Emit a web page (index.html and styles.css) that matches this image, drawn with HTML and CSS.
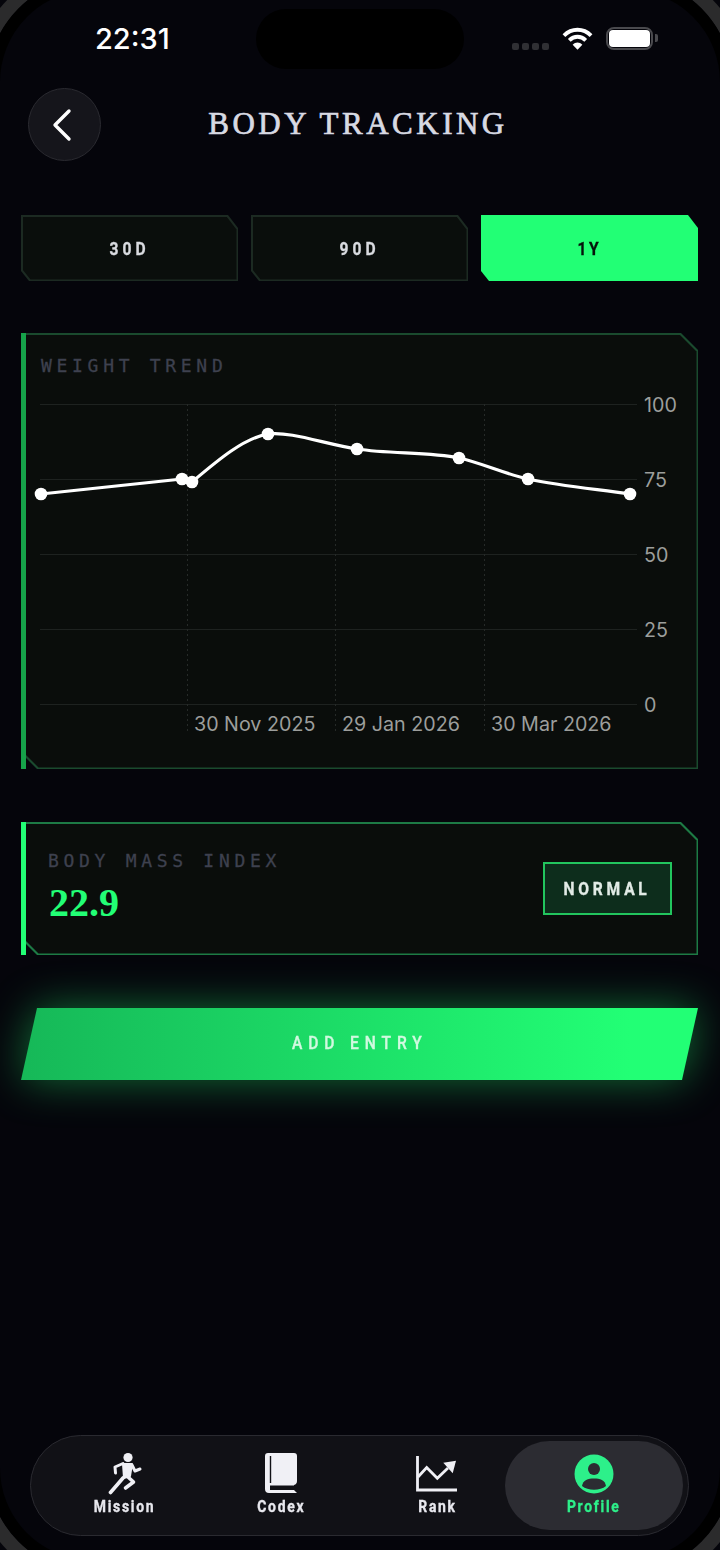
FILE: index.html
```html
<!DOCTYPE html>
<html lang="en">
<head>
  <meta charset="UTF-8">
  <title>Body Tracking</title>
  <link rel="stylesheet" href="styles.css">
</head>
<body>
  <div class="bezel"></div>

  <div class="status-bar">
    <span class="time">22:31</span>
    <div class="island"></div>
    <div class="status-icons">
      <div class="signal"><i></i><i></i><i></i><i></i></div>
      <svg class="wifi" width="31" height="24" viewBox="0 0 32 24">
        <path d="M2 9.5C10 1.5 22 1.5 30 9.5" fill="none" stroke="#fff" stroke-width="4"/>
        <path d="M7.5 14.5C12.5 9.5 19.5 9.5 24.5 14.5" fill="none" stroke="#fff" stroke-width="4"/>
        <path d="M11 19L16 24L21 19C18 16 14 16 11 19Z" fill="#fff"/>
      </svg>
      <div class="battery"><div class="battery-fill"></div></div>
    </div>
  </div>

  <header class="top-bar">
    <button class="back-btn">
      <svg width="24" height="34" viewBox="0 0 24 34">
        <path d="M19 3L5 17L19 31" fill="none" stroke="#fff" stroke-width="3.4" stroke-linecap="round" stroke-linejoin="round"/>
      </svg>
    </button>
    <h1 class="title">Body Tracking</h1>
  </header>

  <div class="ranges">
    <div class="range"><div class="range-inner"><span class="cond">30D</span></div></div>
    <div class="range"><div class="range-inner"><span class="cond">90D</span></div></div>
    <div class="range active"><div class="range-inner"><span class="cond">1Y</span></div></div>
  </div>

  <section class="card chart-card">
    <div class="card-frame">
      <div class="card-inner">
        <div class="label">WEIGHT TREND</div>
        <svg class="chart" width="672" height="340" viewBox="21 394 672 340">
          <g class="grid">
            <line x1="40" y1="404" x2="637" y2="404"/>
            <line x1="40" y1="479" x2="637" y2="479"/>
            <line x1="40" y1="554" x2="637" y2="554"/>
            <line x1="40" y1="629" x2="637" y2="629"/>
            <line x1="40" y1="704" x2="637" y2="704"/>
          </g>
          <g class="grid dashed">
            <line x1="187" y1="404" x2="187" y2="733"/>
            <line x1="335" y1="404" x2="335" y2="733"/>
            <line x1="484" y1="404" x2="484" y2="733"/>
          </g>
          <path class="trend" d="M41 494L182 479L192 482C218 460 244 438 268 434C290 431 325 444 357 449C390 454 430 452 459 458C482 463 505 474 528 479C560 486 595 489 630 494"/>
          <g class="dots">
            <circle cx="41" cy="494" r="6.3"/>
            <circle cx="182" cy="479" r="6.3"/>
            <circle cx="192" cy="482" r="6.3"/>
            <circle cx="268" cy="434" r="6.3"/>
            <circle cx="357" cy="449" r="6.3"/>
            <circle cx="459" cy="458" r="6.3"/>
            <circle cx="528" cy="479" r="6.3"/>
            <circle cx="630" cy="494" r="6.3"/>
          </g>
          <g class="axis">
            <text x="644" y="412">100</text>
            <text x="644" y="487">75</text>
            <text x="644" y="562">50</text>
            <text x="644" y="637">25</text>
            <text x="644" y="712">0</text>
            <text x="194" y="731">30 Nov 2025</text>
            <text x="342" y="731">29 Jan 2026</text>
            <text x="491" y="731">30 Mar 2026</text>
          </g>
        </svg>
      </div>
    </div>
  </section>

  <section class="card bmi-card">
    <div class="card-frame">
      <div class="card-inner bmi-inner">
        <div>
          <div class="label">BODY MASS INDEX</div>
          <div class="bmi-value">22.9</div>
        </div>
        <div class="badge"><span class="cond">NORMAL</span></div>
      </div>
    </div>
  </section>

  <div class="add-wrap">
    <button class="add-btn"><span class="cond">ADD ENTRY</span></button>
  </div>

  <nav class="tabbar">
    <div class="tab">
      <svg width="34" height="44" viewBox="0 0 34 44">
        <circle cx="20" cy="5.5" r="4.6" fill="#f0f0f5"/>
        <path d="M15 12L24 12L22 24L16 26Z" fill="#f0f0f5" stroke="#f0f0f5" stroke-width="2" stroke-linejoin="round"/>
        <path d="M15 11.5L7 15L7.5 21" fill="none" stroke="#f0f0f5" stroke-width="3" stroke-linecap="round" stroke-linejoin="round"/>
        <path d="M24 13L27 19L32 17" fill="none" stroke="#f0f0f5" stroke-width="3" stroke-linecap="round" stroke-linejoin="round"/>
        <path d="M15 26L9 33L2.5 40.5" fill="none" stroke="#f0f0f5" stroke-width="3.6" stroke-linecap="round" stroke-linejoin="round"/>
        <path d="M20 25L25.5 30L17.5 36" fill="none" stroke="#f0f0f5" stroke-width="3.6" stroke-linecap="round" stroke-linejoin="round"/>
      </svg>
      <span class="cond">Mission</span>
    </div>
    <div class="tab">
      <svg width="32" height="44" viewBox="0 0 32 44">
        <path d="M3 1H29Q32 1 32 4V29Q32 32 29 33V38L32 41H4Q0 41 0 37V4Q0 1 3 1Z" fill="#f0f0f5"/>
        <path d="M5.5 4V31" stroke="#111116" stroke-width="1.4"/>
        <path d="M5 33.5H29V38H5Z" fill="#111116"/>
      </svg>
      <span class="cond">Codex</span>
    </div>
    <div class="tab">
      <svg width="42" height="44" viewBox="0 0 42 44">
        <path d="M1.5 4V38H41" fill="none" stroke="#f0f0f5" stroke-width="2.8"/>
        <path d="M2 25L10.7 15.5L21.3 26.3L32 16" fill="none" stroke="#f0f0f5" stroke-width="2.8"/>
        <path d="M27.3 10.7L40 8.7L36.7 21.3Z" fill="#f0f0f5"/>
      </svg>
      <span class="cond">Rank</span>
    </div>
    <div class="tab active">
      <svg class="avatar" width="40" height="40" viewBox="0 0 40 40">
        <circle cx="20" cy="20" r="19.5" fill="#2df08a"/>
        <circle cx="20" cy="15" r="6" fill="#2c2c32"/>
        <path d="M8 32C9 26 14 24.5 20 24.5C26 24.5 31 26 32 32C26 37 14 37 8 32Z" fill="#2c2c32"/>
      </svg>
      <span class="cond">Profile</span>
    </div>
  </nav>
</body>
</html>
```

FILE: styles.css
```css
* { box-sizing: border-box; }
html, body { margin: 0; padding: 0; }
body {
  position: relative;
  width: 720px;
  height: 1550px;
  overflow: hidden;
  display: flex;
  flex-direction: column;
  background-color: #05050b;
  color: #f0f0f0;
  font-family: Roboto, "Liberation Sans", sans-serif;
}

/* phone edge in the corners */
.bezel {
  position: absolute;
  left: -12px;
  top: -22px;
  width: 744px;
  height: 1594px;
  border: 12px solid #000;
  border-radius: 104px;
  box-shadow: 0 0 0 14px #2b2b2c;
  pointer-events: none;
}

/* condensed look for the labels, no narrow font is installed */
.cond {
  display: inline-block;
  transform: scaleX(0.82);
  white-space: nowrap;
  -webkit-text-stroke: 0.35px currentColor;
}

.status-bar {
  position: relative;
  height: 78px;
  flex-shrink: 0;
}
.time {
  position: absolute;
  left: 95px;
  top: 22px;
  font-family: Inter, sans-serif;
  font-size: 29px;
  font-weight: 500;
  line-height: 34px;
  color: #fff;
}
.island {
  position: absolute;
  left: 256px;
  top: 9px;
  width: 208px;
  height: 60px;
  border-radius: 30px;
  background: #000;
}
.status-icons {
  position: absolute;
  left: 512px;
  top: 26px;
  display: flex;
  align-items: center;
}
.signal { display: flex; gap: 3px; margin-top: 17px; }
.signal i { width: 7px; height: 7px; border-radius: 2px; background: #303034; }
.wifi { margin-left: 13px; }
.battery {
  position: relative;
  width: 47px;
  height: 23px;
  margin-left: 13px;
  padding: 1px;
  border: 2.5px solid #4a4a4e;
  border-radius: 8px;
}
.battery::after {
  content: "";
  position: absolute;
  right: -7px;
  top: 5px;
  width: 3px;
  height: 8px;
  border-radius: 0 2px 2px 0;
  background: #4a4a4e;
}
.battery-fill { height: 100%; background: #fff; border-radius: 4px; }

.top-bar {
  position: relative;
  height: 137px;
  flex-shrink: 0;
}
.back-btn {
  position: absolute;
  left: 28px;
  top: 10px;
  width: 73px;
  height: 73px;
  display: flex;
  align-items: center;
  justify-content: center;
  padding: 0 6px 0 0;
  border: 1px solid #2a2a30;
  border-radius: 50%;
  background: #15151b;
}
.title {
  margin: 0;
  padding: 25px 4px 0 0;
  text-align: center;
  font-family: "Liberation Serif", serif;
  font-size: 31px;
  font-weight: 400;
  line-height: 42px;
  letter-spacing: 3.5px;
  text-transform: uppercase;
  color: #d8dae3;
  -webkit-text-stroke: 0.7px #d8dae3;
}

.ranges {
  display: grid;
  grid-template-columns: repeat(3, 217px);
  gap: 13px;
  margin: 0 22px 0 21px;
  flex-shrink: 0;
}
.range {
  height: 66px;
  padding: 1.5px;
  background: #1c2a22;
  clip-path: polygon(0 0, calc(100% - 10px) 0, 100% 13px, 100% 100%, 8px 100%, 0 calc(100% - 10px));
}
.range-inner {
  height: 100%;
  display: flex;
  align-items: center;
  justify-content: center;
  background: #0a0e0c;
  clip-path: polygon(0 0, calc(100% - 10px) 0, 100% 13px, 100% 100%, 8px 100%, 0 calc(100% - 10px));
  font-size: 19px;
  font-weight: 700;
  letter-spacing: 5px;
  color: #d9dbe0;
}
.range.active { background: #22ff75; }
.range.active .range-inner { background: #22ff75; color: #06120b; letter-spacing: 3px; }

.card {
  position: relative;
  margin: 0 22px 0 21px;
  flex-shrink: 0;
}
/* bar on the left is not cut by the corner */
.card::before {
  content: "";
  position: absolute;
  left: 0;
  top: 0;
  bottom: 0;
  width: 5px;
  z-index: 1;
}
.card-frame {
  height: 100%;
  padding: 1.5px;
  clip-path: polygon(0 0, calc(100% - 17px) 0, 100% 17px, 100% 100%, 16px 100%, 0 calc(100% - 16px));
}
.card-inner {
  height: 100%;
  background: #0a0d0b;
  clip-path: polygon(0 0, calc(100% - 17px) 0, 100% 17px, 100% 100%, 16px 100%, 0 calc(100% - 16px));
}
.chart-card {
  height: 436px;
  margin-top: 52px;
}
.chart-card .card-frame { background: #1a4a2e; }
.chart-card::before { background: #16a34a; }
.chart-card .card-inner { padding: 20.5px 0 0 18.5px; }
.chart-card .chart { display: block; margin: 17px 0 0 -20px; overflow: visible; }

.label {
  font-family: "DejaVu Sans Mono", monospace;
  font-size: 18px;
  line-height: 22px;
  letter-spacing: 4.7px;
  color: #3e414f;
  -webkit-text-stroke: 0.3px #3e414f;
}

.grid line { stroke: #1e2220; stroke-width: 1; shape-rendering: crispEdges; }
.grid.dashed line { stroke-dasharray: 2 3; stroke: #262a28; }
.trend { fill: none; stroke: #fff; stroke-width: 3.2; stroke-linejoin: round; }
.dots circle { fill: #fff; }
.axis text {
  font-family: Inter, sans-serif;
  font-size: 19.7px;
  fill: #9c9e9c;
}

.bmi-card {
  height: 133px;
  margin-top: 53px;
}
.bmi-card .card-frame { background: #1d7a45; }
.bmi-card::before { background: #22ff75; }
.bmi-inner {
  display: flex;
  align-items: flex-start;
  justify-content: space-between;
  padding: 26.5px 24.5px 0 25.5px;
}
.bmi-value {
  margin: 9px 0 0 1px;
  font-family: "Liberation Serif", serif;
  font-size: 40px;
  font-weight: 700;
  line-height: 44px;
  color: #22ff75;
}
.badge {
  width: 129px;
  height: 53px;
  margin-top: 12px;
  display: flex;
  align-items: center;
  justify-content: center;
  border: 2px solid #22c55e;
  background: #0d2d1c;
  font-size: 19px;
  font-weight: 700;
  letter-spacing: 4.6px;
  color: #e2ebe6;
}

.add-wrap {
  margin: 53px 22px 0 21px;
  flex-shrink: 0;
  filter: drop-shadow(0 0 22px rgba(34, 255, 117, 0.42));
}
.add-btn {
  display: block;
  width: 100%;
  height: 72px;
  padding: 0 0 4px;
  border: 0;
  background: linear-gradient(90deg, #16b858 0%, #22ff75 90%);
  clip-path: polygon(16px 0, 100% 0, calc(100% - 16px) 100%, 0 100%);
  font-family: Roboto, sans-serif;
  font-size: 19px;
  font-weight: 500;
  letter-spacing: 7.2px;
  color: #d2f9e0;
}

.tabbar {
  display: flex;
  align-items: stretch;
  position: absolute;
  left: 30px;
  bottom: 14px;
  width: 659px;
  height: 101px;
  padding: 5px 5px 5px 16px;
  background: #111116;
  border: 1px solid #2a2a30;
  border-radius: 51px;
}
.tab {
  flex: 0 0 156px;
  display: flex;
  flex-direction: column;
  align-items: center;
  padding-top: 11px;
  font-size: 17px;
  font-weight: 700;
  line-height: 18px;
  letter-spacing: 2.1px;
  color: #e8e8ee;
}
.tab svg { display: block; margin-bottom: 1px; }
.tab .avatar { margin: 2px 0 3px; }
.tab.active {
  flex: 0 0 178px;
  margin-left: -10px;
  background: #2c2c32;
  border-radius: 45px;
  color: #2df08a;
}
```
